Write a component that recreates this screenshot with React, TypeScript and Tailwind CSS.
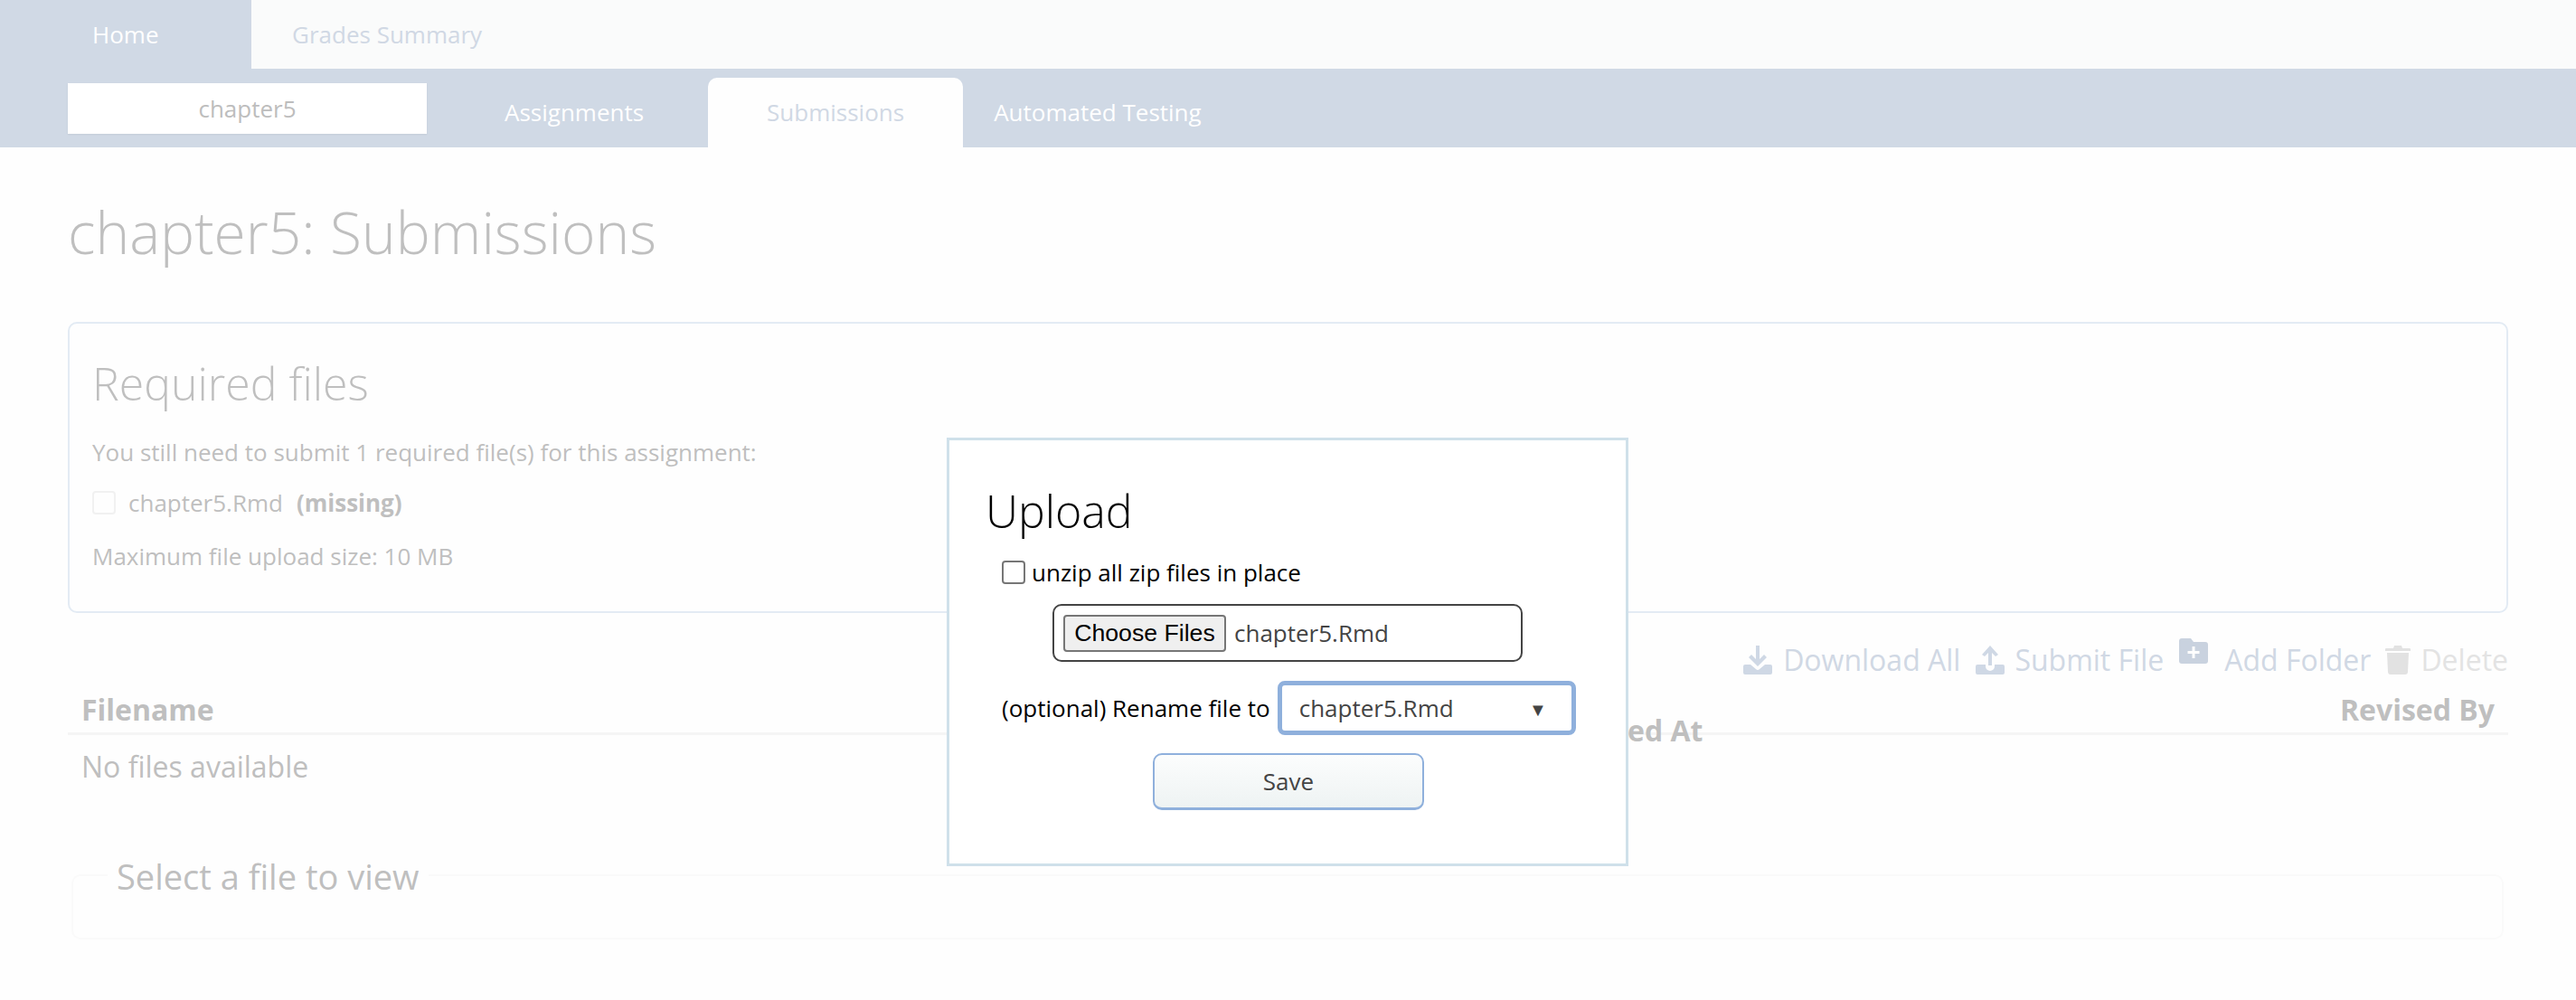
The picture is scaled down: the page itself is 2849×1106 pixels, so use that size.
const sans = "font-['Open_Sans',sans-serif]";

function DownloadIcon() {
  return (
    <svg width="32" height="32" viewBox="0 0 32 32" className="mr-[12px]" fill="#cfd8e5">
      <path d="M14 0h4v15l5-5 3 3-10 10-10-10 3-3 5 5z" />
      <path d="M0 23a2 2 0 0 1 2-2h6l6 5a3 3 0 0 0 4 0l6-5h6a2 2 0 0 1 2 2v7a2 2 0 0 1-2 2H2a2 2 0 0 1-2-2z" />
    </svg>
  );
}

function UploadIcon() {
  return (
    <svg width="32" height="32" viewBox="0 0 32 32" className="mr-[11px]" fill="#cfd8e5">
      <path d="M16 0l9 10-3 2-4-4v14h-4V8l-4 4-3-2z" />
      <path d="M0 23a2 2 0 0 1 2-2h9v2a5 5 0 0 0 10 0v-2h9a2 2 0 0 1 2 2v7a2 2 0 0 1-2 2H2a2 2 0 0 1-2-2z" />
    </svg>
  );
}

function FolderIcon() {
  return (
    <svg width="32" height="28" viewBox="0 0 32 28" className="mr-[18px] self-start mt-[-6px]" fill="#c9d2df">
      <path d="M3 0h10l3 4h13a3 3 0 0 1 3 3v18a3 3 0 0 1-3 3H3a3 3 0 0 1-3-3V3a3 3 0 0 1 3-3z" />
      <path d="M14.500 9h3v5h5v3h-5v5h-3v-5h-5v-3h5z" fill="#fefefe" />
    </svg>
  );
}

function TrashIcon() {
  return (
    <svg width="28" height="32" viewBox="0 0 28 32" className="mr-[11px]" fill="#e2e2e2">
      <path d="M10 0h8l1 3h8a1 1 0 0 1 1 1v2H0V4a1 1 0 0 1 1-1h8z" />
      <path d="M2 8h24l-1 21a3 3 0 0 1-3 3H6a3 3 0 0 1-3-3z" />
    </svg>
  );
}

function Action({ icon, label, className }: { icon: React.ReactNode; label: string; className: string }) {
  return (
    <span className={`flex items-center ${className}`}>
      {icon}
      <span>{label}</span>
    </span>
  );
}

export default function App() {
  return (
    <div className={`relative h-[1106px] overflow-hidden bg-[#fefefe] ${sans} text-[26px] leading-[36px] text-[#bfbfbf]`}>
      <div className="flex h-[76px] bg-[#fafbfb]">
        <div className="flex w-[278px] items-center bg-[#d0d9e5] pl-[102px] text-white">Home</div>
        <div className="flex items-center pl-[45px] text-[#d0d8e4]">Grades Summary</div>
      </div>
      <div className="flex h-[87px] bg-[#d0d9e5] pl-[75px]">
        <div className="mt-[16px] flex h-[56px] w-[397px] items-center justify-center bg-white text-[#bdbdbd] shadow-[0_1px_2px_rgba(0,0,0,0.06)]">chapter5</div>
        <div className="ml-[86px] mt-[30px] text-white">Assignments</div>
        <div className="ml-[71px] mt-[10px] flex h-[77px] w-[282px] justify-center rounded-t-[10px] bg-[#fefefe] pt-[20px] text-[#d0d8e4]">Submissions</div>
        <div className="ml-[34px] mt-[30px] text-white">Automated Testing</div>
      </div>
      <div className="px-[75px]">
        <h1 className="mt-[50px] text-[64px] font-light leading-[88px]">chapter5: Submissions</h1>
        <section className="mt-[55px] h-[322px] rounded-[10px] border-2 border-[#e3ebf4] pl-[25px] pr-[25px]">
          <h2 className="mt-[32px] text-[50px] font-light leading-[68px]">Required files</h2>
          <p className="mt-[24px]">You still need to submit 1 required file(s) for this assignment:</p>
          <div className="mt-[20px] flex items-center">
            <span className="h-[26px] w-[26px] rounded-[4px] border-2 border-[#f1f1f1]"></span>
            <span className="ml-[14px]">chapter5.Rmd</span>
            <b className="ml-[15px] font-bold">(missing)</b>
          </div>
          <p className="mt-[23px]">Maximum file upload size: 10 MB</p>
        </section>
        <div className="mt-[30px] flex h-[44px] items-center justify-end text-[32px] text-[#d0d8e4]">
          <Action className="mr-[17px]" icon={<DownloadIcon />} label="Download All" />
          <Action className="mr-[17px]" icon={<UploadIcon />} label="Submit File" />
          <Action className="mr-[16px]" icon={<FolderIcon />} label="Add Folder" />
          <Action className="text-[#e3e3e3]" icon={<TrashIcon />} label="Delete" />
        </div>
        <div className="flex h-[61px] items-center justify-between border-b-[3px] border-[#f5f5f5] px-[15px] pt-[8px] text-[32px] font-bold">
          <span>Filename</span>
          <span>Revised By</span>
        </div>
        <p className="ml-[15px] mt-[13px] text-[32px] leading-[44px]">No files available</p>
        <div className="relative ml-[4px] mr-[5px] mt-[97px] h-[72px] rounded-[10px] border-2 border-[#fafafa]">
          <span className="absolute left-[38px] top-[-26px] bg-[#fefefe] px-[10px] text-[38px] leading-[52px]">Select a file to view</span>
        </div>
      </div>
      <div className="absolute left-[1215px] top-[800px] text-[32px] font-bold leading-[44px] text-[#bfbfbf] hidden" />
      <div className="absolute left-[1047px] top-[484px] flex h-[474px] w-[754px] flex-col border-[3px] border-[#cfe0ea] bg-white text-black">
        <h3 className="ml-[40px] mt-[44px] text-[50px] font-light leading-[68px]">Upload</h3>
        <label className="ml-[58px] mt-[16px] flex items-center">
          <span className="h-[26px] w-[26px] rounded-[4px] border-2 border-[#767676] bg-white"></span>
          <span className="ml-[7px]">unzip all zip files in place</span>
        </label>
        <div className="ml-[114px] mt-[17px] flex h-[64px] w-[520px] items-center rounded-[10px] border-2 border-[#444] pl-[10px]">
          <span className="flex h-[41px] w-[180px] items-center justify-center rounded-[4px] border-2 border-[#767676] bg-[#efefef] font-['Liberation_Sans',sans-serif] text-[26.67px]">Choose Files</span>
          <span className="ml-[9px] text-[#444]">chapter5.Rmd</span>
        </div>
        <div className="ml-[58px] mt-[21px] flex items-center">
          <span>(optional) Rename file to</span>
          <span className="ml-[8px] flex h-[60px] w-[330px] items-center justify-between rounded-[8px] border-[5px] border-[#8fb0dc] pl-[19px] pr-[27px] text-[#444]">
            <span>chapter5.Rmd</span>
            <span className="mt-[4px] text-[20px] leading-none">▼</span>
          </span>
        </div>
        <button className="ml-[225px] mt-[20px] h-[63px] w-[300px] rounded-[10px] border-2 border-b-[3px] border-[#8fb0dc] bg-gradient-to-b from-[#fcfdfd] to-[#eef3f3] text-[26px] text-[#444]">Save</button>
      </div>
      <div className="absolute left-[1800px] top-[786px] text-[32px] font-bold leading-[44px]">ed At</div>
    </div>
  );
}
